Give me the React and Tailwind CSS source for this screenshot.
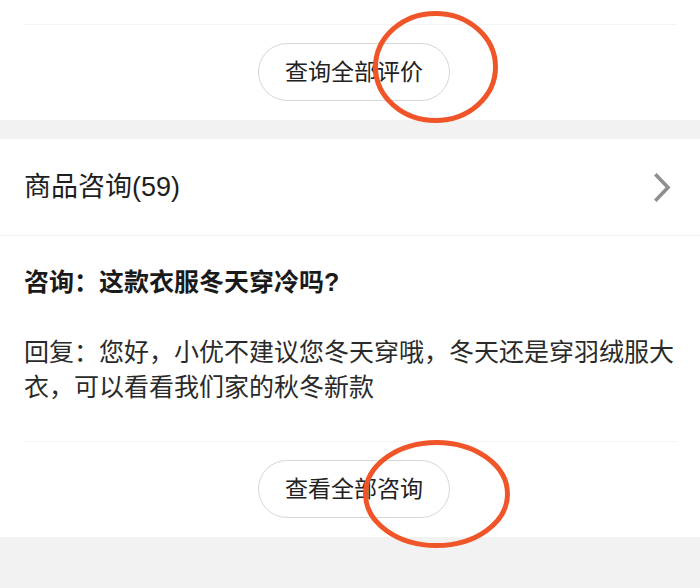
const font = {
	fontFamily: '"Liberation Sans", "Noto Sans CJK SC", sans-serif',
};

function PillButton({ children }) {
	return (
		<div className="flex justify-center pt-[18px] pb-[19px] pl-2">
			<button
				type="button"
				className="flex h-[58px] w-[192px] items-center justify-center rounded-full border border-[#d6d6d6] bg-white text-[23px] text-[#222]">
				{children}
			</button>
		</div>
	);
}

export default function App() {
	return (
		<div className="relative min-h-[588px] w-[700px] bg-[#f2f2f2]" style={font}>
			{/* end of reviews block */}
			<section className="bg-white pt-6">
				<div className="mx-6 h-px bg-[#f4f4f4]" />
				<PillButton>查询全部评价</PillButton>
			</section>

			<div className="h-[19px]" />

			{/* product Q&A */}
			<section className="bg-white">
				<div className="flex h-[97px] items-center justify-between border-b border-[#f2f2f2] pl-6 pr-[29px]">
					<h2 className="text-[27px] font-normal text-[#1e1e1e]">商品咨询(59)</h2>
					<svg width="17" height="29" viewBox="0 0 17 29" fill="none">
						<polyline
							points="2.5,2.5 14,14.5 2.5,26.5"
							stroke="#8f8f8f"
							strokeWidth="3.6"
							strokeLinecap="square"
							strokeLinejoin="miter"
						/>
					</svg>
				</div>
				<div className="px-6 pt-[29px] pb-9 text-[25px] leading-[35px]">
					<p className="font-bold text-[#1a1a1a]">咨询：这款衣服冬天穿冷吗?</p>
					<p className="mt-[35px] text-[#2a2a2a]">
						回复：您好，小优不建议您冬天穿哦，冬天还是穿羽绒服大衣，可以看看我们家的秋冬新款
					</p>
				</div>
				<div className="mx-6 h-px bg-[#f4f4f4]" />
				<PillButton>查看全部咨询</PillButton>
			</section>

			{/* annotation marks */}
			<svg
				className="pointer-events-none absolute top-0 left-0"
				width="700"
				height="588"
				viewBox="0 0 700 588"
				fill="none">
				<ellipse cx="435.5" cy="67" rx="60" ry="53.5" stroke="#f0552a" strokeWidth="5" />
				<ellipse cx="436.5" cy="494" rx="71" ry="51.5" stroke="#f0552a" strokeWidth="5" />
			</svg>
		</div>
	);
}
